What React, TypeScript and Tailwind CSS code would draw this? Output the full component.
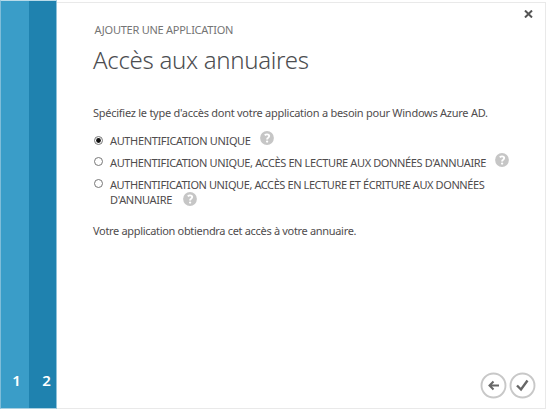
import type { ReactNode } from 'react';

function Help({ className }: { className: string }) {
  return (
    <svg viewBox="0 0 14 14" className={`h-[14px] w-[14px] shrink-0 ${className}`}>
      <circle cx="7" cy="7" r="6.9" fill="#c6c6c6" />
      <path d="M4.7 4.2Q5.8 3.4 7 3.4Q9.2 3.4 9.2 5.1Q9.2 6 8.1 6.7Q7.1 7.3 7.1 8.4" fill="none" stroke="#fff" strokeWidth="1.9" />
      <circle cx="7.1" cy="10.6" r="1.15" fill="#fff" />
    </svg>
  );
}

function Radio({ checked }: { checked?: boolean }) {
  return (
    <svg viewBox="0 0 9 9" className={`mr-[7px] ml-px h-[9px] w-[9px] shrink-0 ${checked ? 'mt-[3px]' : 'mt-[2px]'}`}>
      <circle cx="4.5" cy="4.5" r="4" fill="#fff" stroke="#777" strokeWidth="1" />
      {checked && <circle cx="4.5" cy="4.5" r="2.4" fill="#111" />}
    </svg>
  );
}

function Line({ children, className }: { children: ReactNode; className: string }) {
  return <span className={`block whitespace-nowrap ${className}`}>{children}</span>;
}

export default function App() {
  return (
    <div className="flex h-[410px] w-[547px] overflow-hidden bg-white font-['Noto_Sans',sans-serif] text-[11px] leading-[15px] text-[#4f4c4d]">
      <aside className="flex h-[409px] w-[57px] shrink-0 border-t border-r border-b border-l border-t-[#b9dbe9] border-r-[#8fc2da] border-b-[#a9cfe0] border-l-[#7fbdd9] text-[15px] leading-5 font-semibold text-white">
        <div className="flex w-7 items-end justify-center bg-[#3a9dc8] pb-[18px] pl-[3px]">1</div>
        <div className="flex flex-1 items-end justify-center bg-[#1f82af] pb-[18px] pl-[8px]">2</div>
      </aside>
      <main className="mt-[2px] flex h-[407px] w-[489px] flex-col border-t border-r border-b border-[#e9e9e9] pl-9">
        <div className="flex justify-between">
          <h2 className="mt-[19px] ml-[1.5px] text-[11px] whitespace-nowrap tracking-[-0.25px] text-[#747474]">AJOUTER UNE APPLICATION</h2>
          <svg viewBox="0 0 9 8" className="mt-[7px] mr-3 h-2 w-[9px]" stroke="#555" strokeWidth="2" fill="none">
            <path d="M1 .5L8 7.5M8 .5L1 7.5" />
          </svg>
        </div>
        <h1 className="mt-[5px] text-[24px] leading-9 font-light whitespace-nowrap tracking-[-0.3px] text-[#4c4d50]">Accès aux annuaires</h1>
        <p className="mt-[27px]"><Line className="tracking-[-0.26px]">Spécifiez le type d'accès dont votre application a besoin pour Windows Azure AD.</Line></p>
        <div className="mt-[13px] flex h-[15px]">
          <Radio checked />
          <Line className="tracking-[-0.36px]">AUTHENTIFICATION UNIQUE</Line>
          <Help className="-mt-[2px] ml-[9px]" />
        </div>
        <div className="mt-[7px] flex h-[15px]">
          <Radio />
          <Line className="tracking-[-0.38px]">AUTHENTIFICATION UNIQUE, ACCÈS EN LECTURE AUX DONNÉES D'ANNUAIRE</Line>
          <Help className="-mt-[2px] ml-[9px]" />
        </div>
        <div className="mt-[7px] flex h-[30px]">
          <Radio />
          <div>
            <Line className="tracking-[-0.41px]">AUTHENTIFICATION UNIQUE, ACCÈS EN LECTURE ET ÉCRITURE AUX DONNÉES</Line>
            <div className="flex">
              <Line className="tracking-[-0.3px]">D'ANNUAIRE</Line>
              <Help className="ml-[11px]" />
            </div>
          </div>
        </div>
        <p className="mt-4"><Line className="tracking-[-0.32px]">Votre application obtiendra cet accès à votre annuaire.</Line></p>
        <div className="mt-auto mr-[9px] mb-[9px] flex justify-end gap-[2px]">
          <svg viewBox="0 0 27 27" className="h-[27px] w-[27px]" fill="none">
            <circle cx="13.5" cy="13.5" r="12" stroke="#c8c8c8" strokeWidth="1.9" />
            <path d="M19 13.5H9.5M13.5 9.5L9.5 13.5L13.5 17.5" stroke="#666" strokeWidth="2" />
          </svg>
          <svg viewBox="0 0 27 27" className="h-[27px] w-[27px]" fill="none">
            <circle cx="13.5" cy="13.5" r="12" stroke="#c8c8c8" strokeWidth="1.9" />
            <path d="M8 13.5L12 17.5L18.5 8.5" stroke="#666" strokeWidth="2.4" />
          </svg>
        </div>
      </main>
    </div>
  );
}
